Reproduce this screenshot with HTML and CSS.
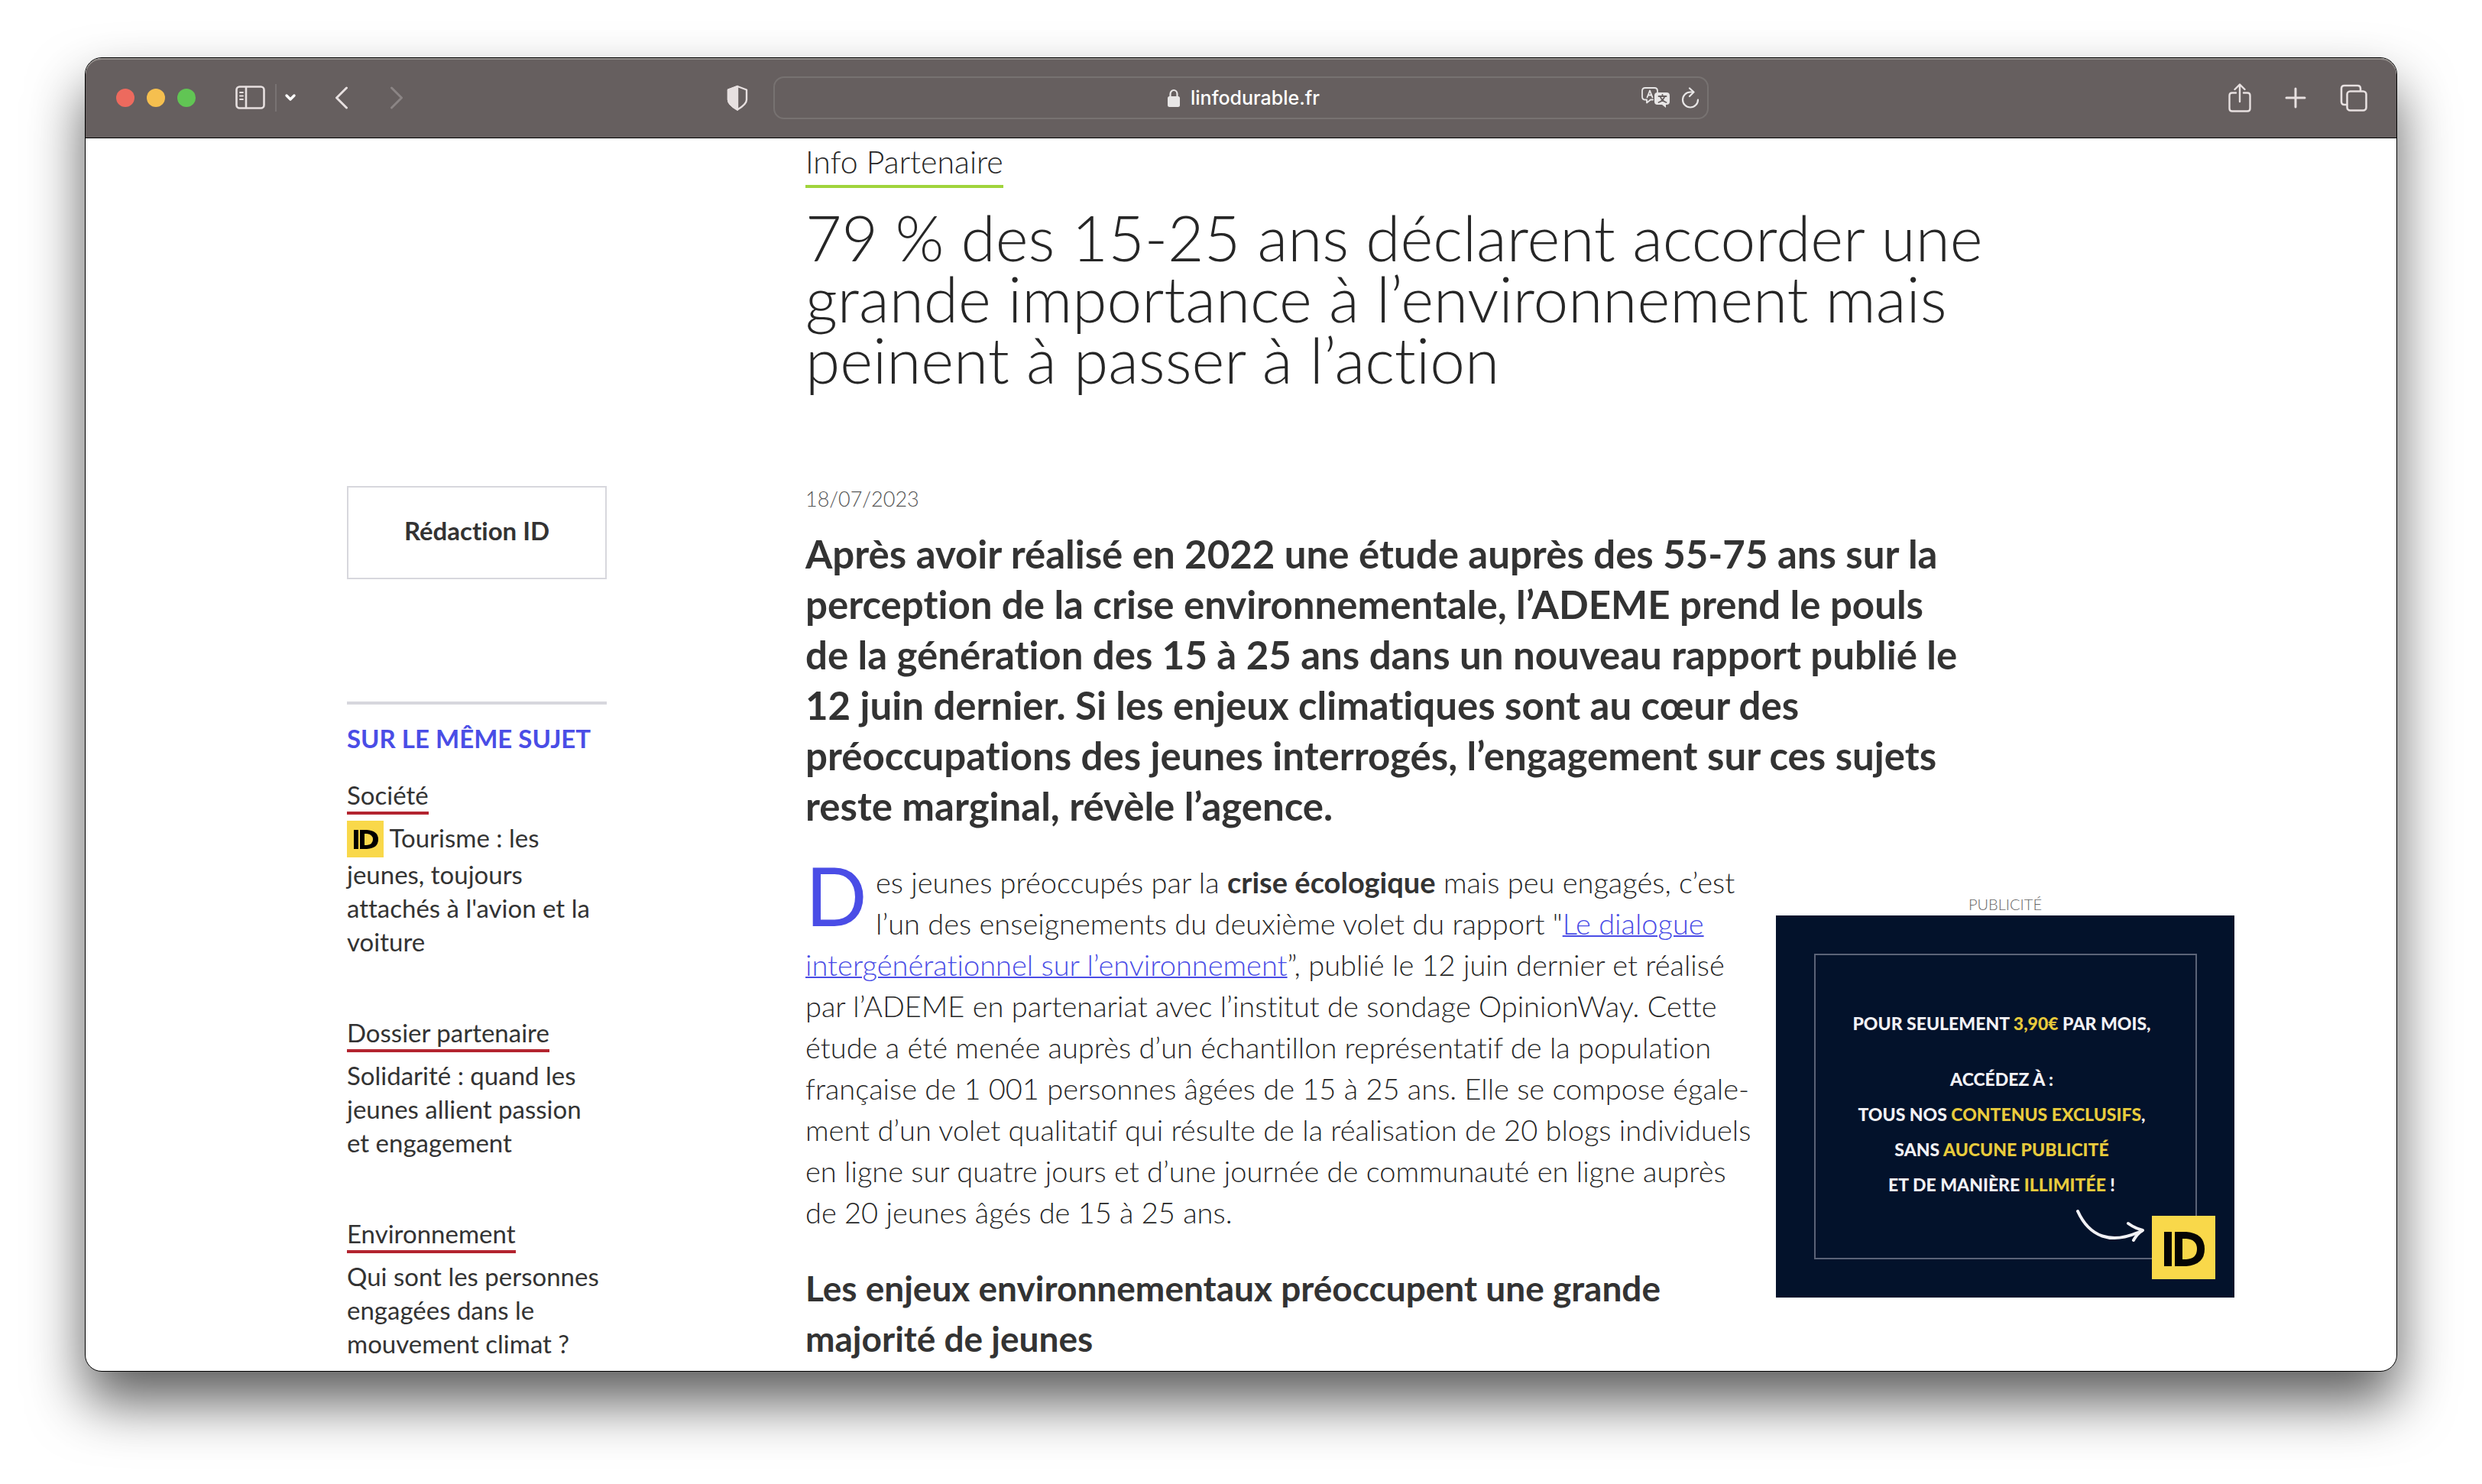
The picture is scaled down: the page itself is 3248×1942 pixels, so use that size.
FILE: index.html
```html
<!DOCTYPE html>
<html lang="fr">
<head>
<meta charset="utf-8">
<title>linfodurable.fr</title>
<link rel="stylesheet" href="styles.css">
</head>
<body>
<div class="window">
  <header class="toolbar">
    <div class="toolbar-left">
      <div class="lights"><span class="light red"></span><span class="light yellow"></span><span class="light green"></span></div>
      <button class="tool sidebar-btn" aria-label="Barre latérale">
        <svg width="40" height="32" viewBox="0 0 40 32" fill="none" stroke="currentColor" stroke-width="2.6" stroke-linecap="round"><rect x="1.5" y="1.5" width="36" height="28" rx="4"/><path d="M14 2v27"/><path d="M6 9h4M6 13.500h4M6 18h4" stroke-width="1.800"/></svg>
      </button>
      <span class="divider"></span>
      <button class="tool menu-btn" aria-label="Groupes d’onglets">
        <svg width="16" height="12" viewBox="0 0 16 12" fill="none" stroke="#fff" stroke-width="3.4" stroke-linecap="round" stroke-linejoin="round"><path d="M3 3l5 5 5-5"/></svg>
      </button>
      <button class="tool back-btn" aria-label="Précédent">
        <svg width="18" height="30" viewBox="0 0 18 30" fill="none" stroke="currentColor" stroke-width="3" stroke-linecap="round" stroke-linejoin="round"><path d="M15.500 2L2.500 15l13 13"/></svg>
      </button>
      <button class="tool forward-btn" aria-label="Suivant" disabled>
        <svg width="18" height="30" viewBox="0 0 18 30" fill="none" stroke="currentColor" stroke-width="3" stroke-linecap="round" stroke-linejoin="round"><path d="M2.500 2l13 13-13 13"/></svg>
      </button>
    </div>
    <div class="toolbar-center">
      <button class="tool" aria-label="Rapport de confidentialité">
        <svg width="30" height="34" viewBox="0 0 30 34" fill="none" stroke="currentColor" stroke-width="2.400" stroke-linejoin="round"><path d="M15 2l12 4.500v13c0 5-6 9.500-12 13-6-3.500-12-8-12-13v-13z"/><path d="M15 2v30.500c-6-3.500-12-8-12-13v-13z" fill="currentColor"/></svg>
      </button>
      <div class="address">
        <span class="site">
          <svg width="18" height="24" viewBox="0 0 18 24"><path d="M4.500 11V7a4.500 5 0 0 1 9 0v4" fill="none" stroke="#e8e6e6" stroke-width="2.200"/><rect x="1" y="10" width="16" height="14" rx="2.500" fill="#e8e6e6"/></svg>
          <span>linfodurable.fr</span>
        </span>
        <button class="tool translate-btn" aria-label="Traduire">
          <svg width="38" height="28" viewBox="0 0 38 28" fill="none" stroke="#e8e6e6" stroke-width="1.800" stroke-linejoin="round" stroke-linecap="round"><path d="M15 16.500h-3l-5 4v-4H5q-4 0-4-4V5q0-4 4-4h12q4 0 4 4v1.500"/><path d="M7.500 13.500L11 4.500l3.500 9M8.700 10.500h4.600"/><path d="M21 7h12q4 0 4 4v8q0 4-4 4h-1v4l-5-4h-6q-4 0-4-4v-8q0-4 4-4z" fill="#e8e6e6" stroke="none"/><path d="M22.500 12h10M27.500 10v2M30.500 12q-2 6-8 8M24.500 12q2 6 8 8" stroke="#665f5f"/></svg>
        </button>
        <button class="tool" aria-label="Recharger">
          <svg width="24" height="28" viewBox="0 0 24 28" fill="none" stroke="#e8e6e6" stroke-width="2.200" stroke-linecap="round" stroke-linejoin="round"><path d="M22 16.500A10 10 0 1 1 12 6.500h4"/><path d="M11 1.500l5.500 5-5.500 5.500"/></svg>
        </button>
      </div>
    </div>
    <div class="toolbar-right">
      <button class="tool" aria-label="Partager">
        <svg width="30" height="38" viewBox="0 0 30 38" fill="none" stroke="currentColor" stroke-width="2.400" stroke-linecap="round" stroke-linejoin="round"><path d="M10 12.500H5q-3.500 0-3.500 3.500v17q0 3.500 3.500 3.500h20q3.500 0 3.500-3.500V16q0-3.500-3.500-3.500h-5"/><path d="M15 24V2M8.500 8L15 1.500 21.500 8"/></svg>
      </button>
      <button class="tool" aria-label="Nouvel onglet">
        <svg width="28" height="28" viewBox="0 0 28 28" fill="none" stroke="currentColor" stroke-width="3" stroke-linecap="round"><path d="M14 2v24M2 14h24"/></svg>
      </button>
      <button class="tool" aria-label="Aperçu des onglets">
        <svg width="36" height="36" viewBox="0 0 36 36" fill="none" stroke="currentColor" stroke-width="2.600" stroke-linejoin="round"><path d="M9.500 27H6q-4 0-4-4V6q0-4 4-4h17q4 0 4 4v3.500"/><rect x="9.500" y="9.500" width="25" height="25" rx="4"/></svg>
      </button>
    </div>
  </header>

  <main class="page">
    <div class="heading">
      <a class="category" href="#">Info Partenaire</a>
      <h1>79 % des 15-25 ans déclarent accorder une<br>grande importance à l’environnement mais<br>peinent à passer à l’action</h1>
    </div>

    <aside class="side">
      <a class="author" href="#">Rédaction ID</a>
      <section class="related">
        <h2>SUR LE MÊME SUJET</h2>
        <article class="item">
          <a class="tag" href="#">Société</a>
          <p><svg class="badge" width="48" height="48" viewBox="0 0 48 48"><rect width="48" height="48" fill="#f9d84a"/><path d="M9 12h6v25H9zM17 12h9q15 1 15 12.500T26 37h-9zM23 17v15h3q8-1 8-7.500T26 17z" fill="#000" fill-rule="evenodd"/></svg> Tourisme : les<br>jeunes, toujours<br>attachés à l'avion et la<br>voiture</p>
        </article>
        <article class="item">
          <a class="tag" href="#">Dossier partenaire</a>
          <p>Solidarité : quand les<br>jeunes allient passion<br>et engagement</p>
        </article>
        <article class="item">
          <a class="tag" href="#">Environnement</a>
          <p>Qui sont les personnes<br>engagées dans le<br>mouvement climat ?</p>
        </article>
      </section>
    </aside>

    <article class="story">
      <time class="date" datetime="2023-07-18">18/07/2023</time>
      <p class="lead">Après avoir réalisé en 2022 une étude auprès des 55-75 ans sur la<br>perception de la crise environnementale, l’ADEME prend le pouls<br>de la génération des 15 à 25 ans dans un nouveau rapport publié le<br>12 juin dernier. Si les enjeux climatiques sont au cœur des<br>préoccupations des jeunes interrogés, l’engagement sur ces sujets<br>reste marginal, révèle l’agence.</p>
      <div class="columns">
        <div class="text">
          <p><span class="dropcap">D</span>es jeunes préoccupés par la <strong>crise écologique</strong> mais peu engagés, c’est<br>l’un des enseignements du deuxième volet du rapport "<a href="#">Le dialogue<br>intergénérationnel sur l’environnement</a>”, publié le 12 juin dernier et réalisé<br>par l’ADEME en partenariat avec l’institut de sondage OpinionWay. Cette<br>étude a été menée auprès d’un échantillon représentatif de la population<br>française de 1 001 personnes âgées de 15 à 25 ans. Elle se compose égale-<br>ment d’un volet qualitatif qui résulte de la réalisation de 20 blogs individuels<br>en ligne sur quatre jours et d’une journée de communauté en ligne auprès<br>de 20 jeunes âgés de 15 à 25 ans.</p>
          <h2>Les enjeux environnementaux préoccupent une grande<br>majorité de jeunes</h2>
        </div>
        <div class="ad">
          <span class="ad-label">PUBLICITÉ</span>
          <a class="banner" href="#">
            <span class="frame">
              <span class="line first">POUR SEULEMENT <em>3,90€</em> PAR MOIS,</span>
              <span class="line">ACCÉDEZ À :</span>
              <span class="line">TOUS NOS <em>CONTENUS EXCLUSIFS</em>,</span>
              <span class="line">SANS <em>AUCUNE PUBLICITÉ</em></span>
              <span class="line">ET DE MANIÈRE <em>ILLIMITÉE</em> !</span>
            </span>
            <svg class="arrow" width="92" height="46" viewBox="0 0 92 46" fill="none" stroke="#f1f1f5" stroke-width="4" stroke-linecap="round" stroke-linejoin="round"><path d="M3 3C18 36 46 48 86 29"/><path d="M69 19q8 6 19 9-7 4-12 13"/></svg>
            <svg class="ad-logo" width="83" height="83" viewBox="0 0 83 83"><rect width="83" height="83" fill="#f9d84a"/><path d="M16 21h10v45H16zM30 21h15q24 2 24 22.500T45 66H30zM40 30v27h5q14-1 14-13.500T45 30z" fill="#050505" fill-rule="evenodd"/></svg>
          </a>
        </div>
      </div>
    </article>
  </main>
</div>
</body>
</html>
```
FILE: styles.css
```css
* { box-sizing: border-box; }

body {
  margin: 0;
  height: 100vh;
  padding: 75px 111px 147px;
  display: flex;
  background: #fff;
  color: #333;
  font-family: Lato, "Open Sans", sans-serif;
  font-size: 33px;
  font-variant-ligatures: none;
  line-height: 44px;
}

h1, h2, p { margin: 0; }
a { color: inherit; text-decoration: none; }

.window {
  flex: 1;
  min-width: 0;
  overflow: hidden;
  display: flex;
  flex-direction: column;
  border: 1px solid #000;
  border-radius: 22px;
  background: #fff;
  box-shadow: 0 40px 72px rgba(0, 0, 0, 0.63);
}

/* Browser toolbar */
.toolbar {
  flex: none;
  height: 105px;
  display: grid;
  grid-template-columns: 1fr auto 1fr;
  background: #665f5f;
  border-bottom: 1px solid #000;
  box-shadow: inset 0 2px #918c89;
  border-radius: 21px 21px 0 0;
  color: #e7e0e0;
}
.toolbar-left, .toolbar-center, .toolbar-right, .address, .site, .lights {
  display: flex;
  align-items: center;
}
.toolbar-left { padding-left: 40px; }
.toolbar-right {
  justify-content: flex-end;
  gap: 44px;
  padding-right: 38px;
}
.tool {
  display: flex;
  padding: 0;
  border: 0;
  background: none;
  color: inherit;
}
.lights { gap: 16px; }
.light { width: 24px; height: 24px; border-radius: 50%; }
.red { background: #ed6a5e; }
.yellow { background: #f5bf4f; }
.green { background: #61c554; }
.sidebar-btn { margin-left: 52px; }
.divider { width: 2px; height: 36px; margin: 0 10px 0 12px; background: #787272; }
.back-btn { margin-left: 50px; }
.forward-btn { margin-left: 54px; color: #8b8585; }

.toolbar-center { gap: 32px; margin-right: 62px; }
.address {
  width: 1224px;
  height: 56px;
  padding: 0 10px;
  gap: 14px;
  border: 2px solid #777271;
  border-radius: 14px;
}
.site {
  flex: 1;
  justify-content: center;
  gap: 13px;
  padding-left: 96px;
  color: #fff;
  font: 500 25px/32px Inter, "Liberation Sans", sans-serif;
}

/* Page */
.page {
  flex: 1;
  min-height: 0;
  overflow: hidden;
  display: grid;
  grid-template-columns: 340px minmax(0, 1fr);
  grid-template-rows: auto 1fr;
  column-gap: 260px;
  row-gap: 126px;
  padding: 6px 212px 0 342px;
}
.heading { grid-column: 2; color: #262626; }
.category {
  display: table;
  padding-bottom: 5px;
  border-bottom: 4px solid #a0d43c;
  font-size: 41px;
  font-weight: 300;
  line-height: 50px;
}
h1 {
  margin-top: 24px;
  font-size: 82px;
  font-weight: 300;
  line-height: 80px;
  white-space: nowrap;
}

/* Sidebar */
.author {
  display: flex;
  align-items: center;
  justify-content: center;
  height: 122px;
  padding-bottom: 6px;
  border: 2px solid #d7d7dd;
  font-weight: 700;
}
.related {
  margin-top: 160px;
  padding-top: 22px;
  border-top: 4px solid #d7d7dd;
}
.related h2 {
  color: #4a4de6;
  font-size: 33px;
  font-weight: 700;
  line-height: 44px;
  white-space: nowrap;
}
.item { margin-top: 75px; white-space: nowrap; }
.related h2 + .item { margin-top: 30px; }
.tag {
  display: table;
  margin-bottom: 8px;
  border-bottom: 4px solid #b3242f;
}
.badge { vertical-align: -13px; }

/* Story */
.story { white-space: nowrap; }
.date {
  display: block;
  color: #555;
  font-size: 27px;
  font-weight: 300;
  line-height: 34px;
}
.lead {
  margin-top: 22px;
  font-size: 51px;
  font-weight: 700;
  line-height: 66px;
}
.columns {
  display: grid;
  grid-template-columns: minmax(0, 1fr) 600px;
  column-gap: 40px;
  margin-top: 39px;
}
.text {
  color: #262626;
  font-size: 38px;
  font-weight: 300;
  line-height: 54px;
}
.text a { color: #4a4de6; text-decoration: underline; text-decoration-thickness: 2px; }
.text strong { color: #333; font-weight: 700; }
.text h2 {
  margin-top: 40px;
  color: #333;
  font-size: 46px;
  font-weight: 700;
  line-height: 66px;
}
.dropcap {
  float: left;
  width: 92px;
  color: #4a4de6;
  font-size: 106px;
  font-weight: 400;
  line-height: 88px;
}

/* Advertisement */
.ad { padding-top: 41px; }
.ad-label {
  display: block;
  color: #666;
  font-size: 20px;
  font-weight: 300;
  line-height: 30px;
  text-align: center;
}
.banner {
  position: relative;
  display: block;
  padding: 50px 49px 50px 50px;
  background: #03122b;
}
.frame {
  display: block;
  height: 400px;
  padding: 66px 10px 0 0;
  border: 2px solid #5b6377;
  color: #f1f1f5;
  font-size: 23px;
  font-weight: 900;
  line-height: 46px;
  text-align: center;
}
.line { display: block; }
.first { margin-bottom: 27px; }
.line em { color: #e8cb3c; font-style: normal; }
.arrow { position: absolute; right: 116px; bottom: 70px; }
.ad-logo { position: absolute; right: 25px; bottom: 24px; }
```
